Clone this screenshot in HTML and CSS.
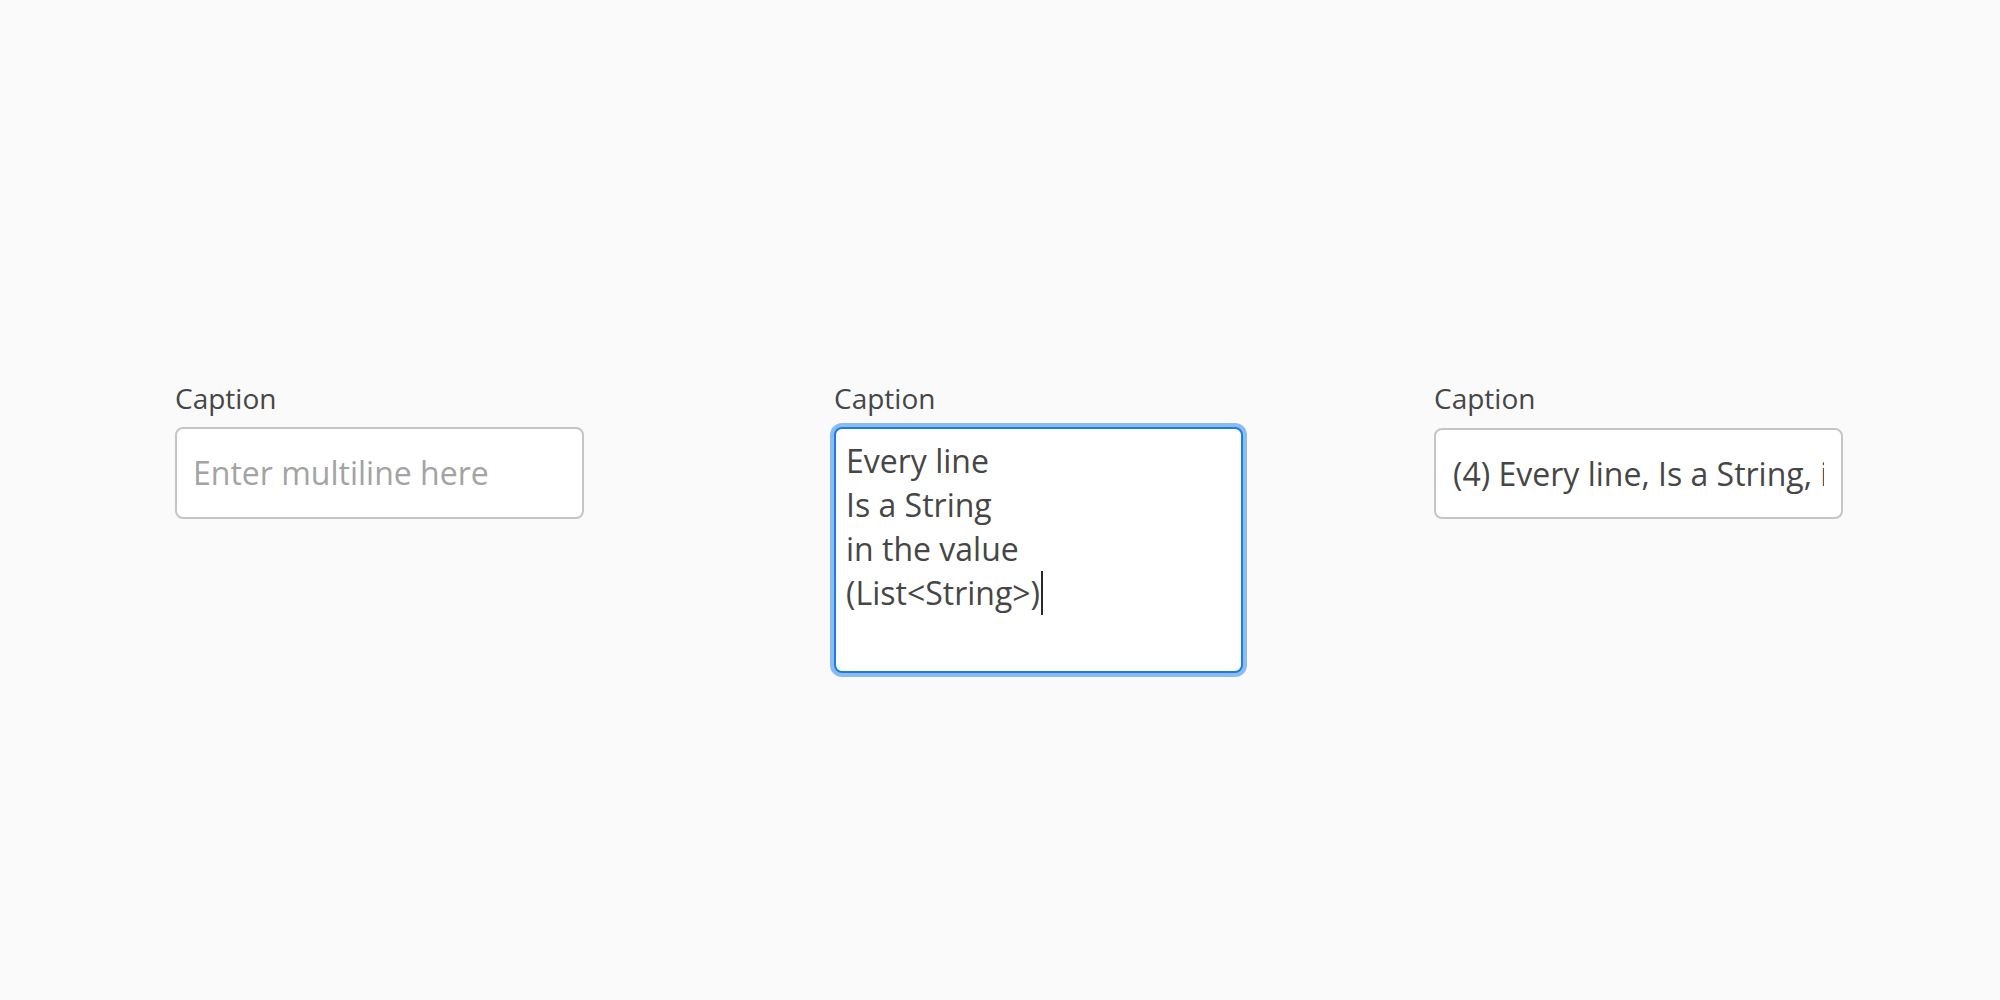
FILE: index.html
```html
<!DOCTYPE html>
<html lang="en">
<head>
<meta charset="utf-8">
<title>Multiline fields</title>
<link rel="stylesheet" href="styles.css">
</head>
<body>
<div class="row">
  <div class="field">
    <div class="caption">Caption</div>
    <div class="box"><div class="val placeholder">Enter multiline here</div></div>
  </div>
  <div class="field field-mid">
    <div class="caption">Caption</div>
    <div class="area">
      <div class="line">Every line</div>
      <div class="line">Is a String</div>
      <div class="line">in the value</div>
      <div class="line">(List&lt;String&gt;)<span class="caret"></span></div>
    </div>
  </div>
  <div class="field field-right">
    <div class="caption">Caption</div>
    <div class="box box-right"><div class="val">(4) Every line, Is a String, in the value, (List&lt;String&gt;)</div></div>
  </div>
</div>
</body>
</html>
```
FILE: styles.css
```css
html, body {
  margin: 0;
  padding: 0;
  background: #fafafa;
}
body {
  font-family: "Open Sans", "Noto Sans", sans-serif;
  color: #464646;
  width: 2000px;
  height: 1000px;
}
.row {
  display: flex;
  align-items: flex-start;
  padding: 379px 0 0 175px;
}
.field {
  width: 409px;
  display: flex;
  flex-direction: column;
}
.field-mid {
  margin-left: 250px;
}
.field-right {
  margin-left: 191px;
}
.caption {
  font-size: 28px;
  line-height: 38px;
  padding-bottom: 10px;
  color: #464646;
}
.box {
  box-sizing: border-box;
  height: 92px;
  border: 2px solid #c5c5c5;
  border-radius: 8px;
  background: #fff;
  padding: 0 16px;
  display: flex;
  align-items: center;
  font-size: 32px;
  line-height: 44px;
}
.box-right {
  margin-top: 1px;
  height: 91px;
  padding: 0 17px 0 17px;
}
.val {
  flex: 1;
  overflow: hidden;
  white-space: nowrap;
}
.placeholder {
  color: #a3a3a3;
}
.area {
  box-sizing: border-box;
  height: 246px;
  border: 2px solid #197de1;
  border-radius: 8px;
  box-shadow: 0 0 0 4px #8cbcef;
  background: #fff;
  padding: 10px;
  font-size: 32px;
  line-height: 44px;
}
.line {
  white-space: nowrap;
}
.caret {
  display: inline-block;
  width: 2px;
  height: 44px;
  background: #2a2a2a;
  vertical-align: top;
  margin-left: 1px;
}
```
